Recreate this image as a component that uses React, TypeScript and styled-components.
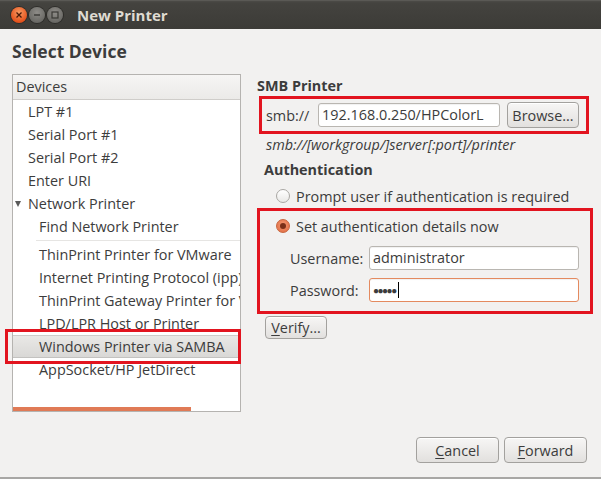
import React from "react";
import styled, { createGlobalStyle } from "styled-components";

const Global = createGlobalStyle`
  html, body { margin: 0; padding: 0; background: #f2f1f0; }
  body { font-family: "Open Sans", "Noto Sans", sans-serif; font-size: 14.4px; color: #3c3c3c; }
  * { box-sizing: border-box; }
`;

const RED = "#e2141f";

const Window = styled.div`
  width: 601px;
  height: 479px;
  display: flex;
  flex-direction: column;
  background: #f2f1f0;
  border-bottom: 2px solid #a8a7a5;
  overflow: hidden;
`;

const TitleBar = styled.div`
  height: 29px;
  flex: none;
  display: flex;
  align-items: center;
  padding-left: 11px;
  background: linear-gradient(#4c4b47 0px, #44433f 2px, #3c3b37 100%);
  border-top: 1px solid #5a5955;
`;

const WinButton = styled.span<{ $kind: "close" | "min" | "max" }>`
  width: 16px;
  height: 16px;
  border-radius: 50%;
  margin-right: ${(p) => (p.$kind === "max" ? "14px" : "2px")};
  display: flex;
  align-items: center;
  justify-content: center;
  background: ${(p) =>
    p.$kind === "close"
      ? "radial-gradient(circle at 50% 35%, #f79a62, #e5531d 70%, #c9441a)"
      : "radial-gradient(circle at 50% 35%, #8e8c88, #6b6a66 70%, #5a5955)"};
  box-shadow: 0 0 0 1px #2e2d2a;
`;

const Title = styled.span`
  color: #dfdbd2;
  font-weight: bold;
  font-size: 15px;
  font-family: "Open Sans", "Noto Sans", sans-serif;
`;

const Body = styled.div`
  flex: 1;
  display: flex;
  flex-direction: column;
  padding: 0 14px 0 12px;
`;

const Heading = styled.div`
  font-weight: bold;
  font-size: 17.5px;
  line-height: 22px;
  margin-top: 11px;
  margin-bottom: 12px;
  color: #3c3c3c;
`;

const Main = styled.div`
  display: flex;
  gap: 16px;
  height: 338px;
`;

const Tree = styled.div`
  width: 229px;
  border: 1px solid #b5b3b0;
  background: #ffffff;
  display: flex;
  flex-direction: column;
  position: relative;
`;

const TreeHeader = styled.div`
  height: 25px;
  line-height: 24px;
  padding-left: 3px;
  background: linear-gradient(#f6f5f4, #ebeae8);
  border-bottom: 1px solid #cfcdca;
  color: #3c3c3c;
`;

const TreeList = styled.div`
  flex: 1;
  display: flex;
  flex-direction: column;
`;

const Row = styled.div<{ $level: number; $selected?: boolean }>`
  height: 23px;
  line-height: 23px;
  padding-left: ${(p) => (p.$level === 2 ? 26 : 15)}px;
  white-space: nowrap;
  position: relative;
  color: #3c3c3c;
  ${(p) =>
    p.$selected &&
    `
    background: linear-gradient(#e9e8e6, #d9d8d6);
    border-top: 1px solid #cdccca;
    border-bottom: 1px solid #c3c2c0;
    line-height: 21px;
    margin-right: 2px;
  `}
`;

const Clip = styled.div`
  overflow: hidden;
`;

const Expander = styled.span`
  position: absolute;
  left: 2px;
  top: 9px;
  width: 0;
  height: 0;
  border-left: 3.5px solid transparent;
  border-right: 3.5px solid transparent;
  border-top: 6px solid #5a5a5a;
`;

const Separator = styled.div`
  margin-left: 23px;
  border-top: 1px solid #e6e5e3;
  margin-top: 2px;
  height: 3px;
`;

const Annotation = styled.span`
  position: absolute;
  left: -8px;
  right: -3px;
  top: -7px;
  bottom: -7px;
  border: 3px solid ${RED};
  pointer-events: none;
`;

const ScrollBar = styled.div`
  height: 4px;
  width: 178px;
  background: #e07a56;
`;

const Right = styled.div`
  flex: 1;
  display: flex;
  flex-direction: column;
  align-items: flex-start;
`;

const Section = styled.div<{ $indent?: number }>`
  font-weight: bold;
  line-height: 20px;
  padding-left: ${(p) => p.$indent ?? 0}px;
  color: #3c3c3c;
`;

const RedBox = styled.div<{ $w: number }>`
  border: 3px solid ${RED};
  width: ${(p) => p.$w}px;
`;

const SmbRow = styled.div`
  display: flex;
  align-items: center;
  height: 32px;
  padding-left: 4px;
`;

const Label = styled.span<{ $w?: number }>`
  width: ${(p) => (p.$w ? `${p.$w}px` : "auto")};
  flex: none;
`;

const Entry = styled.div<{ $w: number; $focus?: boolean }>`
  width: ${(p) => p.$w}px;
  height: 24px;
  background: #ffffff;
  border: 1px solid ${(p) => (p.$focus ? "#e48a5f" : "#b9b6b1")};
  border-radius: 3px;
  padding-left: 3px;
  line-height: 22px;
  display: flex;
  align-items: center;
  white-space: nowrap;
  overflow: hidden;
  color: #3c3c3c;
  box-shadow: inset 0 1px 1px rgba(0, 0, 0, 0.06);
`;

const Dots = styled.span`
  letter-spacing: -1.5px;
  font-size: 10px;
`;

const Cursor = styled.span`
  width: 1px;
  height: 16px;
  background: #000;
  margin-left: 2px;
`;

const Button = styled.div<{ $w: number; $h?: number }>`
  width: ${(p) => p.$w}px;
  height: ${(p) => p.$h ?? 26}px;
  border: 1px solid #a3a19e;
  border-radius: 4px;
  background: linear-gradient(#f7f6f5, #e2e0de);
  display: flex;
  align-items: center;
  justify-content: center;
  color: #3c3c3c;
  flex: none;
  box-shadow: inset 0 1px 0 #ffffff;
`;

const Hint = styled.div`
  font-style: italic;
  line-height: 18px;
  margin-top: 2px;
  padding-left: 9px;
  color: #3c3c3c;
`;

const RadioRow = styled.div<{ $indent: number }>`
  display: flex;
  align-items: center;
  height: 20px;
  padding-left: ${(p) => p.$indent}px;
  gap: 6px;
`;

const Radio = styled.span<{ $on?: boolean }>`
  width: 14px;
  height: 14px;
  border-radius: 50%;
  flex: none;
  display: flex;
  align-items: center;
  justify-content: center;
  border: 1px solid ${(p) => (p.$on ? "#c7643d" : "#a9a7a3")};
  background: ${(p) =>
    p.$on
      ? "radial-gradient(circle at 50% 40%, #f39a72, #e0683f)"
      : "linear-gradient(#ffffff, #e9e8e6)"};
  &::after {
    content: "";
    display: ${(p) => (p.$on ? "block" : "none")};
    width: 6px;
    height: 6px;
    border-radius: 50%;
    background: #7a3018;
  }
`;

const FieldRow = styled.div`
  display: flex;
  align-items: center;
  padding-left: 30px;
  height: 24px;
`;

const Gap = styled.span<{ $w: number }>`
  width: ${(p) => p.$w}px;
  flex: none;
`;

const ButtonRow = styled.div`
  display: flex;
  justify-content: flex-end;
  gap: 5px;
  margin-top: 25px;
`;

const U = styled.span`
  text-decoration: underline;
  text-underline-offset: 2px;
`;

export default function App() {
  return (
    <>
      <Global />
      <Window>
        <TitleBar>
          <WinButton $kind="close">
            <svg width="8" height="8" viewBox="0 0 8 8">
              <path d="M1.5 1.5 L6.5 6.5 M6.5 1.5 L1.5 6.5" stroke="#4a1a08" strokeWidth="1.3" />
            </svg>
          </WinButton>
          <WinButton $kind="min">
            <svg width="8" height="8" viewBox="0 0 8 8">
              <path d="M1 4 H7" stroke="#3a3935" strokeWidth="1.4" />
            </svg>
          </WinButton>
          <WinButton $kind="max">
            <svg width="8" height="8" viewBox="0 0 8 8">
              <rect x="1" y="1" width="6" height="6" fill="none" stroke="#3a3935" strokeWidth="1.2" />
            </svg>
          </WinButton>
          <Title>New Printer</Title>
        </TitleBar>
        <Body>
          <Heading>Select Device</Heading>
          <Main>
            <Tree>
              <TreeHeader>Devices</TreeHeader>
              <TreeList>
                <Row $level={1}>LPT #1</Row>
                <Row $level={1}>Serial Port #1</Row>
                <Row $level={1}>Serial Port #2</Row>
                <Row $level={1}>Enter URI</Row>
                <Row $level={1}>
                  <Expander />
                  Network Printer
                </Row>
                <Row $level={2}>Find Network Printer</Row>
                <Separator />
                <Clip>
                  <Row $level={2}>ThinPrint Printer for VMware</Row>
                  <Row $level={2}>Internet Printing Protocol (ipp)</Row>
                  <Row $level={2}>ThinPrint Gateway Printer for VMware</Row>
                  <Row $level={2}>LPD/LPR Host or Printer</Row>
                </Clip>
                <Row $level={2} $selected>
                  Windows Printer via SAMBA
                  <Annotation />
                </Row>
                <Row $level={2}>AppSocket/HP JetDirect</Row>
              </TreeList>
              <ScrollBar />
            </Tree>
            <Right>
              <Section style={{ marginTop: 2 }}>SMB Printer</Section>
              <RedBox $w={330} style={{ marginLeft: 2 }}>
                <SmbRow>
                  <Label $w={52}>smb://</Label>
                  <Entry $w={182}>192.168.0.250/HPColorL</Entry>
                  <Gap $w={7} />
                  <Button $w={72}>Browse...</Button>
                </SmbRow>
              </RedBox>
              <Hint>smb://[workgroup/]server[:port]/printer</Hint>
              <Section $indent={7} style={{ marginTop: 6 }}>
                Authentication
              </Section>
              <RadioRow $indent={19} style={{ marginTop: 6 }}>
                <Radio />
                Prompt user if authentication is required
              </RadioRow>
              <RedBox $w={336} style={{ marginTop: 2, padding: "5px 0 9px 0" }}>
                <RadioRow $indent={16}>
                  <Radio $on />
                  Set authentication details now
                </RadioRow>
                <FieldRow style={{ marginTop: 10 }}>
                  <Label $w={79}>Username:</Label>
                  <Entry $w={210}>administrator</Entry>
                </FieldRow>
                <FieldRow style={{ marginTop: 8 }}>
                  <Label $w={79}>Password:</Label>
                  <Entry $w={210} $focus>
                    <Dots>●●●●●</Dots>
                    <Cursor />
                  </Entry>
                </FieldRow>
              </RedBox>
              <Button $w={62} $h={23} style={{ marginLeft: 8, marginTop: 2 }}>
                <U>V</U>erify...
              </Button>
            </Right>
          </Main>
          <ButtonRow>
            <Button $w={83}>
              <U>C</U>ancel
            </Button>
            <Button $w={83}>
              <U>F</U>orward
            </Button>
          </ButtonRow>
        </Body>
      </Window>
    </>
  );
}
